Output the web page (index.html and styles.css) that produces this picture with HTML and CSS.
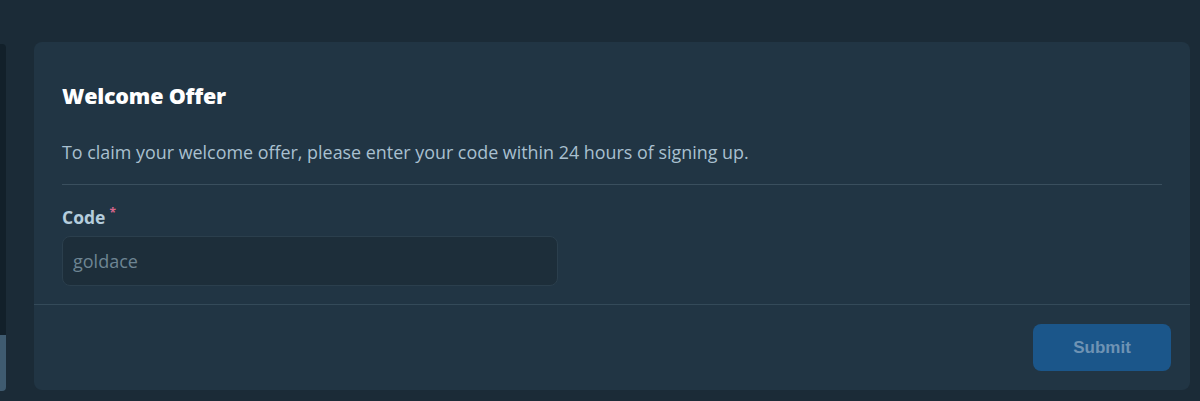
FILE: index.html
```html
<!DOCTYPE html>
<html>
<head>
<meta charset="utf-8">
<link rel="stylesheet" href="styles.css">
</head>
<body>
<div class="page">
  <aside class="side">
    <div class="side-fill"></div>
    <div class="side-active"></div>
  </aside>
  <section class="card">
    <div class="card-body">
      <h2 class="title">Welcome Offer</h2>
      <p class="desc">To claim your welcome offer, please enter your code within 24 hours of signing up.</p>
      <div class="rule"></div>
      <label class="label" for="code">Code<span class="req">*</span></label>
      <input id="code" class="input" type="text" placeholder="goldace">
    </div>
    <div class="card-foot">
      <button class="submit" type="button">Submit</button>
    </div>
  </section>
</div>
</body>
</html>
```
FILE: styles.css
```css
html, body {
  margin: 0;
  padding: 0;
  background: #1b2b37;
  height: 401px;
  overflow: hidden;
}
.page {
  display: flex;
  padding-top: 42px;
  gap: 28px;
  font-family: "Open Sans", "Lato", sans-serif;
}
.side {
  width: 6px;
  height: 347px;
  margin-top: 2px;
  display: flex;
  flex-direction: column;
  border-radius: 0 4px 4px 0;
  overflow: hidden;
}
.side-fill {
  flex: 1;
  background: #12202a;
}
.side-active {
  height: 56px;
  background: #3f5b70;
}
.card {
  width: 1156px;
  height: 348px;
  background: #213544;
  border-radius: 8px;
  display: flex;
  flex-direction: column;
}
.card-body {
  padding: 42px 28px 18px;
  display: flex;
  flex-direction: column;
}
.title {
  margin: 0;
  font-size: 21.5px;
  font-weight: 800;
  color: #ffffff;
  line-height: 24px;
  letter-spacing: -0.2px;
}
.desc {
  margin: 33px 0 0;
  font-size: 17.9px;
  color: #a9c0d0;
  line-height: 22px;
}
.rule {
  height: 1px;
  background: #3a4f5e;
  margin-top: 21px;
}
.label {
  margin-top: 22px;
  font-size: 17.5px;
  font-weight: 700;
  color: #b5cddd;
  line-height: 20px;
}
.req {
  color: #d9668c;
  font-size: 12px;
  vertical-align: top;
  margin-left: 4px;
  line-height: 12px;
}
.input {
  margin-top: 9px;
  width: 496px;
  height: 50px;
  box-sizing: border-box;
  background: #1d2e3a;
  border: 1px solid #2b3f4d;
  border-radius: 8px;
  padding: 0 10px;
  font-family: "Open Sans", sans-serif;
  font-size: 18px;
  color: #c7d5df;
  outline: none;
}
.input::placeholder {
  color: #6e8593;
}
.card-foot {
  border-top: 1px solid #344a59;
  flex: 1;
  display: flex;
  justify-content: flex-end;
  align-items: flex-start;
  padding: 19px 19px 0;
}
.submit {
  width: 138px;
  height: 47px;
  border: none;
  border-radius: 8px;
  background: #1b568a;
  color: #6f93b4;
  font-family: "Liberation Sans", Arial, sans-serif;
  font-weight: 700;
  font-size: 17px;
}
```
